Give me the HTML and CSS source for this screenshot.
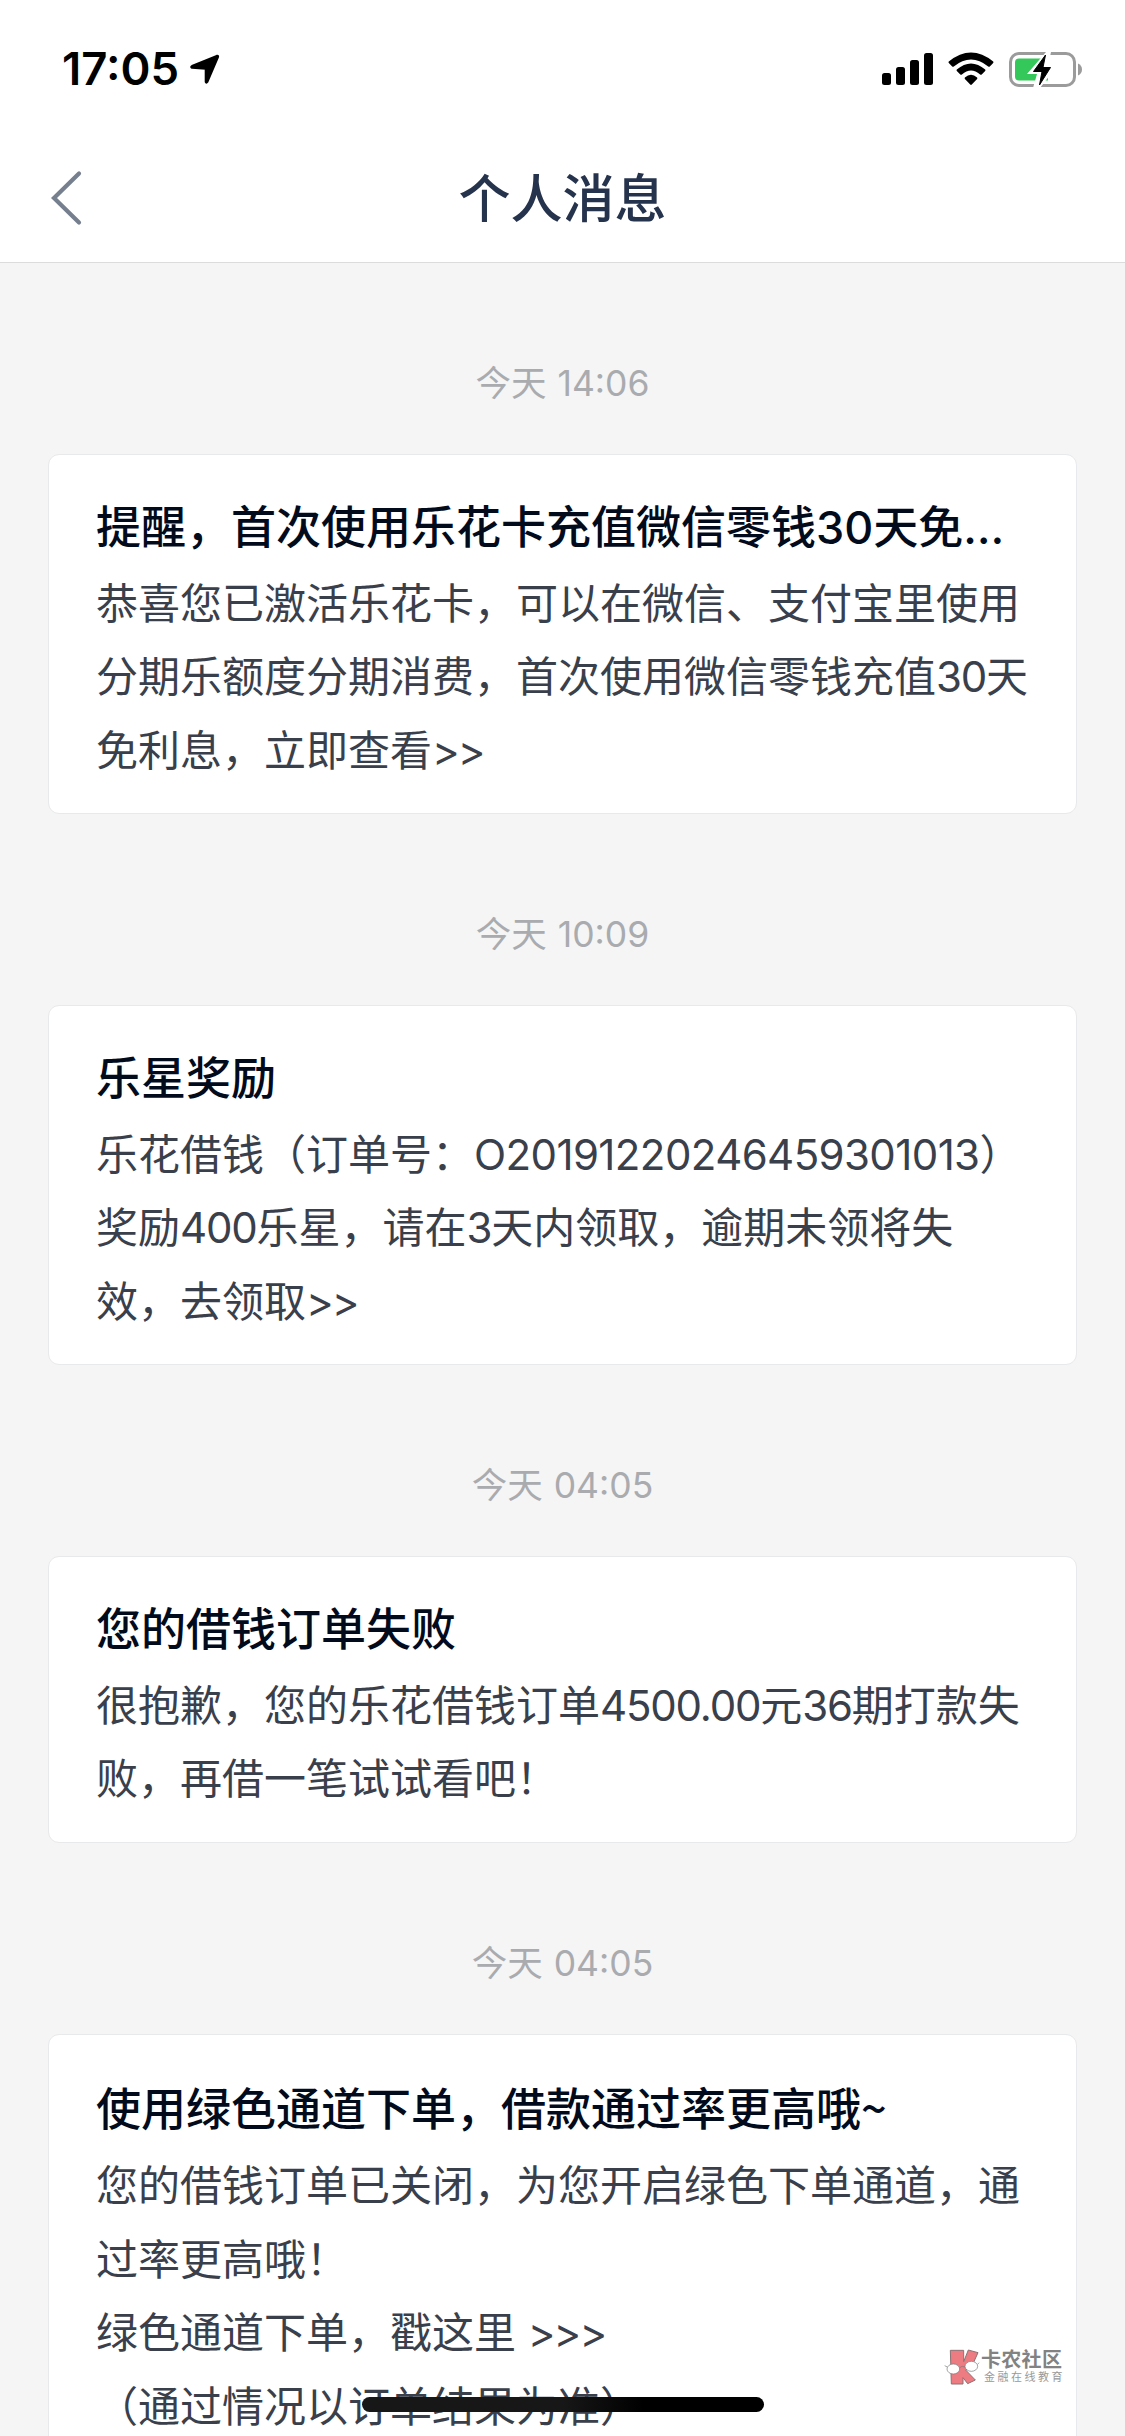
FILE: index.html
```html
<!DOCTYPE html>
<html lang="zh-CN">
<head>
<meta charset="utf-8">
<title>个人消息</title>
<link rel="stylesheet" href="styles.css">
</head>
<body>
<div class="screen">
  <div class="status">
    <div class="clock">17:05</div>
    <svg class="location" width="32" height="34" viewBox="0 0 32 34"><path d="M3 14 27.800 3.800q1.800-.5 1.200 1.200L18.300 30q-1 1.500-1.600-.2V16.800L3 15.800q-1.600-.8 0-1.800z" stroke="#000" stroke-width="2" stroke-linejoin="round"/></svg>
    <div class="indicators">
      <svg width="52" height="34" viewBox="0 0 52 34"><rect x="1" y="21" width="9" height="12" rx="2.500"/><rect x="15" y="15" width="9" height="18" rx="2.500"/><rect x="29" y="8" width="9" height="25" rx="2.500"/><rect x="43" y="1" width="9" height="32" rx="2.500"/></svg>
      <svg width="46" height="34" viewBox="0 0 46 34"><path d="M.8 9.500Q23-8.500 45.200 9.500q.5.800 0 1.500l-3.400 3.400q-.8.500-1.600 0Q23 .5 5.800 14.400q-.8.500-1.600 0L.8 11q-.5-.8 0-1.500zM8.800 17.500Q23 5.500 37.200 17.500q.5.800 0 1.500l-3.500 3.500q-.8.500-1.600 0Q23 14.500 13.900 22.500q-.8.500-1.600 0L8.800 19q-.5-.7 0-1.500zM16.900 25.500Q23 20 29.100 25.500q.5.800 0 1.500l-5.300 5.600q-.8.700-1.600 0L16.900 27q-.5-.7 0-1.500z"/></svg>
      <svg width="74" height="36" viewBox="0 0 74 36"><rect x="1.500" y="1.500" width="64" height="32" rx="8.500" fill="none" stroke="#9b9b9b" stroke-width="3"/><path d="M69 11.500q4 1.800 4 6t-4 6z" fill="#9b9b9b"/><path d="M10 6.500h29v22H10q-4 0-4-4v-14q0-4 4-4z" fill="#34c759"/><path d="M37 0 18 22h10l-4 14h7l17-22H39l3-14z" fill="#fff"/><path d="M36.500 3 24.500 19.500h8.500L30.500 33 41.500 15.500h-7.500z" fill="#000" stroke="#000" stroke-linejoin="round"/></svg>
    </div>
  </div>
  <header class="nav">
    <svg class="back" width="34" height="60" viewBox="0 0 34 60"><path d="M29 6.500 4 31 29 55.500" fill="none" stroke="#757f8e" stroke-width="4.200" stroke-linecap="round"/></svg>
    <h1 class="nav-title">个人消息</h1>
  </header>
  <main class="feed">
    <time class="stamp">今天 14:06</time>
    <article class="card">
      <h2 class="card-title">提醒，首次使用乐花卡充值微信零钱30天免…</h2>
      <p class="card-body">恭喜您已激活乐花卡，可以在微信、支付宝里使用<br>分期乐额度分期消费，首次使用微信零钱充值<span class="num">30</span>天<br>免利息，立即查看<span class="arrows">&gt;&gt;</span></p>
    </article>
    <time class="stamp">今天 10:09</time>
    <article class="card">
      <h2 class="card-title">乐星奖励</h2>
      <p class="card-body">乐花借钱（订单号：<span class="order">O20191220246459301013</span>）<br>奖励<span class="num">400</span>乐星，请在<span class="num">3</span>天内领取，逾期未领将失<br>效，去领取<span class="arrows">&gt;&gt;</span></p>
    </article>
    <time class="stamp">今天 04:05</time>
    <article class="card">
      <h2 class="card-title">您的借钱订单失败</h2>
      <p class="card-body">很抱歉，您的乐花借钱订单<span class="num">4500.00</span>元<span class="num">36</span>期打款失<br>败，再借一笔试试看吧！</p>
    </article>
    <time class="stamp">今天 04:05</time>
    <article class="card">
      <h2 class="card-title">使用绿色通道下单，借款通过率更高哦<span class="tilde">~</span></h2>
      <p class="card-body">您的借钱订单已关闭，为您开启绿色下单通道，通<br>过率更高哦！<br>绿色通道下单，戳这里 <span class="arrows">&gt;&gt;&gt;</span><br>（通过情况以订单结果为准）</p>
    </article>
  </main>
  <div class="home-bar"></div>
  <div class="watermark">
    <svg width="36" height="37" viewBox="72 54 108 111"><path d="M91 61h40v34l14-35 29 8-19 42-18 10 29 30-23 11-14-18v19H94z" fill="#ec7b82" stroke="#8b7375" stroke-width="3" stroke-linejoin="round"/><g fill="#fff" stroke="#777" stroke-width="2"><ellipse cx="100" cy="117" rx="19" ry="15"/><ellipse cx="154" cy="109" rx="19" ry="15"/><path d="M74 107l8 4M119 113q7-7 16-2M173 103l4-5" fill="none"/></g></svg>
    <div class="watermark-text"><b>卡农社区</b><span>金融在线教育</span></div>
  </div>
</div>
</body>
</html>
```
FILE: styles.css
```css
* { box-sizing: border-box; }

body {
  margin: 0;
  background: #f5f5f5;
  font-family: Inter, "Noto Sans CJK SC", sans-serif;
}

.screen {
  position: relative;
  width: 1125px;
  height: 2436px;
  overflow: hidden;
}

.status {
  display: flex;
  align-items: flex-start;
  height: 132px;
  padding: 0 42px 0 62px;
  background: #fff;
}

.clock {
  width: 127px;
  padding-top: 41px;
  font-size: 45.5px;
  line-height: 56px;
  font-weight: 600;
  color: #000;
}

.location { margin-top: 52px; }

.indicators {
  display: flex;
  gap: 15px;
  margin: 52px 0 0 auto;
}

.nav {
  display: grid;
  grid-template-columns: 100px 1fr 100px;
  align-items: center;
  height: 131px;
  border-bottom: 1px solid #dcdcdc;
  background: #fff;
}

.back { margin-left: 50px; }

.nav-title {
  margin: 0;
  padding-top: 5px;
  text-align: center;
  font-size: 52px;
  line-height: 72px;
  font-weight: 500;
  color: #26334d;
}

.feed {
  display: flex;
  flex-direction: column;
  padding: 0 48px;
}

.stamp {
  flex: none;
  height: 191px;
  padding-top: 96px;
  text-align: center;
  font-size: 35.5px;
  line-height: 50px;
  word-spacing: 1px;
  color: #a9abaf;
}

.card {
  flex: none;
  padding: 33.5px 0 26px 47px;
  border: 1px solid #e8e9eb;
  border-radius: 11px;
  background: #fff;
  white-space: nowrap;
}

.card-title {
  margin: 0;
  font-size: 45px;
  line-height: 78px;
  font-weight: 500;
  color: #020b1c;
}

.tilde { font-family: "Noto Sans CJK SC", sans-serif; }

.card-body {
  margin: 0;
  font-size: 42px;
  line-height: 73.5px;
  color: #3a404b;
}

.num { letter-spacing: -1.2px; }

.order { letter-spacing: -0.6px; }

.arrows { letter-spacing: -2px; }

.home-bar {
  position: absolute;
  left: 362px;
  top: 2397px;
  width: 402px;
  height: 15px;
  border-radius: 8px;
  background: linear-gradient(90deg, #171717 50%, #000 70%);
}

.watermark {
  position: absolute;
  left: 944px;
  top: 2348px;
  display: flex;
  gap: 1px;
}

.watermark-text {
  display: flex;
  flex-direction: column;
  white-space: nowrap;
}

.watermark-text b {
  font-size: 20px;
  line-height: 25px;
  letter-spacing: 0.3px;
  font-weight: 700;
  color: #828282;
}

.watermark-text span {
  margin-top: -2px;
  padding-left: 3px;
  font-size: 11px;
  line-height: 13px;
  letter-spacing: 2.500px;
  color: #999;
}
```
